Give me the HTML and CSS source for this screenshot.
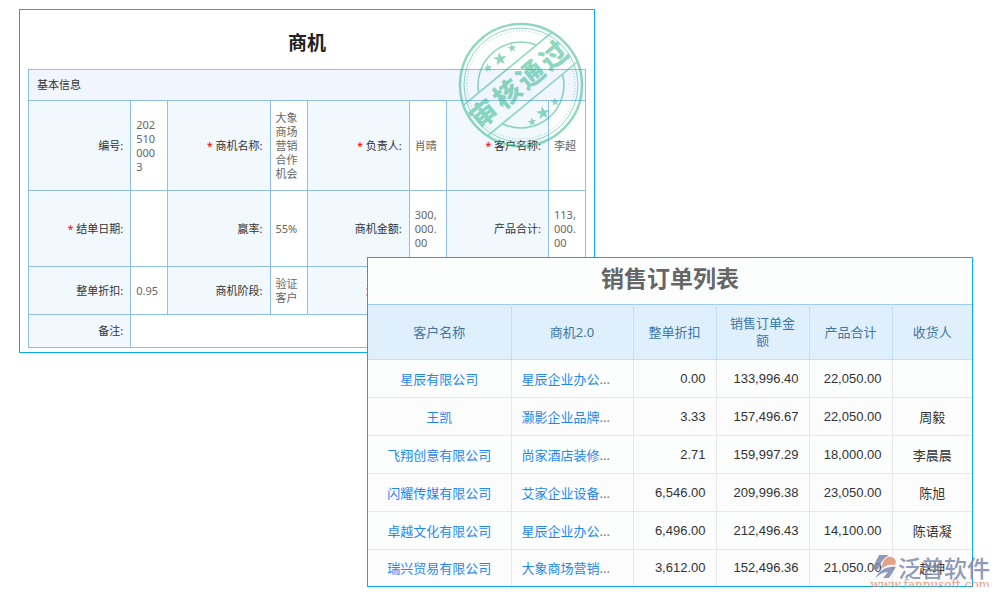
FILE: index.html
```html
<!DOCTYPE html>
<html lang="zh-CN">
<head>
    <meta charset="UTF-8">
    <title>商机</title>
    <link rel="stylesheet" href="styles.css">
</head>
<body>
    <main class="stage">
        <section class="form-panel">
            <h1 class="form-title">商机</h1>
            <table class="form-table">
                <colgroup>
                    <col><col class="col-value">
                    <col><col class="col-value">
                    <col><col class="col-value">
                    <col><col class="col-value">
                </colgroup>
                <tr class="row-section">
                    <th colspan="8" class="section-name">基本信息</th>
                </tr>
                <tr class="row-large">
                    <th>编号:</th>
                    <td>2025100003</td>
                    <th><span class="required">*</span> 商机名称:</th>
                    <td>大象商场营销合作机会</td>
                    <th><span class="required">*</span> 负责人:</th>
                    <td>肖晴</td>
                    <th><span class="required">*</span> 客户名称:</th>
                    <td>李超</td>
                </tr>
                <tr class="row-medium">
                    <th><span class="required">*</span> 结单日期:</th>
                    <td></td>
                    <th>赢率:</th>
                    <td>55%</td>
                    <th>商机金额:</th>
                    <td>300,000.00</td>
                    <th>产品合计:</th>
                    <td>113,000.00</td>
                </tr>
                <tr class="row-small">
                    <th>整单折扣:</th>
                    <td>0.95</td>
                    <th>商机阶段:</th>
                    <td>验证客户</td>
                    <th>源线索:</th>
                    <td></td>
                    <th></th>
                    <td></td>
                </tr>
                <tr class="row-note">
                    <th>备注:</th>
                    <td colspan="7"></td>
                </tr>
            </table>

            <svg class="stamp" viewBox="-63 -64 126 128" role="img" aria-label="审核通过">
                <defs>
                    <path id="star" d="M0 -7 L1.7 -2.3 L6.7 -2.2 L2.7 0.9 L4.1 5.7 L0 2.9 L-4.1 5.7 L-2.7 0.9 L-6.7 -2.2 L-1.7 -2.3 Z"/>
                </defs>
                <g class="stamp-rings">
                    <circle r="61" stroke-width="2.4"/>
                    <circle r="57" stroke-width="1"/>
                    <circle r="54" stroke-width="1" stroke-dasharray="1 2"/>
                </g>
                <g transform="rotate(-39.5)">
                    <g class="stamp-rings">
                        <path d="M-37.5 -21 A43 43 0 0 1 37.5 -21" stroke-width="1.6"/>
                        <path d="M-39 18 A43 43 0 0 0 39 18" stroke-width="1.6"/>
                        <path d="M-57 -21 H57 M-58 18 H58" stroke-width="1.6"/>
                    </g>
                    <g class="stamp-text">
                        <text x="-47" y="8">审</text>
                        <text x="-16" y="8">核</text>
                        <text x="14" y="8">通</text>
                        <text x="44" y="8">过</text>
                    </g>
                </g>
                <g class="stamp-stars">
                    <use href="#star" transform="translate(-21 -26) rotate(-8)"/>
                    <use href="#star" transform="translate(-33 -17) rotate(-8) scale(.65)"/>
                    <use href="#star" transform="translate(-9 -37) rotate(-8) scale(.65)"/>
                    <use href="#star" transform="translate(22 28) rotate(-8)"/>
                    <use href="#star" transform="translate(11 37) rotate(-8) scale(.65)"/>
                    <use href="#star" transform="translate(34 17) rotate(-8) scale(.65)"/>
                </g>
            </svg>
        </section>

        <section class="list-panel">
            <h2 class="list-title">销售订单列表</h2>
            <table class="list-table">
                <colgroup>
                    <col>
                    <col class="col-chance">
                    <col class="col-discount">
                    <col class="col-amount">
                    <col class="col-total">
                    <col class="col-receiver">
                </colgroup>
                <thead>
                    <tr>
                        <th>客户名称</th>
                        <th>商机2.0</th>
                        <th>整单折扣</th>
                        <th>销售订单金额</th>
                        <th>产品合计</th>
                        <th>收货人</th>
                    </tr>
                </thead>
                <tbody>
                    <tr>
                        <td><a href="#">星辰有限公司</a></td>
                        <td class="chance"><a href="#">星辰企业办公</a>...</td>
                        <td class="num">0.00</td>
                        <td class="num">133,996.40</td>
                        <td class="num">22,050.00</td>
                        <td></td>
                    </tr>
                    <tr>
                        <td><a href="#">王凯</a></td>
                        <td class="chance"><a href="#">灏影企业品牌</a>...</td>
                        <td class="num">3.33</td>
                        <td class="num">157,496.67</td>
                        <td class="num">22,050.00</td>
                        <td>周毅</td>
                    </tr>
                    <tr>
                        <td><a href="#">飞翔创意有限公司</a></td>
                        <td class="chance"><a href="#">尚家酒店装修</a>...</td>
                        <td class="num">2.71</td>
                        <td class="num">159,997.29</td>
                        <td class="num">18,000.00</td>
                        <td>李晨晨</td>
                    </tr>
                    <tr>
                        <td><a href="#">闪耀传媒有限公司</a></td>
                        <td class="chance"><a href="#">艾家企业设备</a>...</td>
                        <td class="num">6,546.00</td>
                        <td class="num">209,996.38</td>
                        <td class="num">23,050.00</td>
                        <td>陈旭</td>
                    </tr>
                    <tr>
                        <td><a href="#">卓越文化有限公司</a></td>
                        <td class="chance"><a href="#">星辰企业办公</a>...</td>
                        <td class="num">6,496.00</td>
                        <td class="num">212,496.43</td>
                        <td class="num">14,100.00</td>
                        <td>陈语凝</td>
                    </tr>
                    <tr>
                        <td><a href="#">瑞兴贸易有限公司</a></td>
                        <td class="chance"><a href="#">大象商场营销</a>...</td>
                        <td class="num">3,612.00</td>
                        <td class="num">152,496.36</td>
                        <td class="num">21,050.00</td>
                        <td>赵坤</td>
                    </tr>
                </tbody>
            </table>
        </section>

        <div class="watermark">
            <div class="watermark-brand">
                <svg class="watermark-logo" viewBox="0 0 24 24" aria-hidden="true">
                    <path class="logo-blue" d="M6 0 H16 C11 3 8 7 6 13 L3 16 L0 12 Z"/>
                    <path class="logo-orange" d="M9 11 C10 5 14 1 18 2 C22 3 24 6 22 10 C17 9 12 10 7 15 Z"/>
                    <path class="logo-blue" d="M2 23 C8 14 14 11 23 12 L16 23 H10 L15 17 C10 17 7 19 2 23 Z"/>
                </svg>
                <span>泛普软件</span>
            </div>
            <div class="watermark-url">www.fanpusoft.com</div>
        </div>
    </main>
</body>
</html>
```
FILE: styles.css
```css
* {
    box-sizing: border-box;
}

body {
    margin: 0;
    background: #fff;
    color: #333;
    font-family: "Noto Sans", "Noto Sans CJK SC", sans-serif;
    font-size: 13px;
}

table {
    width: 100%;
    border-collapse: collapse;
    table-layout: fixed;
}

th {
    font-weight: normal;
}

a {
    color: #1e88f0;
    text-decoration: none;
}

/* the list panel shares the middle column with the form panel */
.stage {
    position: relative;
    display: grid;
    grid-template-columns: 348fr 228fr 378fr;
    align-items: start;
    padding: 9px 27px 0 19px;
}

.form-panel {
    position: relative;
    grid-column: 1 / 3;
    grid-row: 1;
    padding: 0 8px 4px;
    border: 1px solid #0aabea;
}

.form-title {
    margin: 0;
    padding: 18px 0 13px;
    color: #222;
    font-family: "Noto Sans CJK SC", sans-serif;
    font-size: 19px;
    line-height: 28px;
    text-align: center;
}

.form-table {
    font-size: 11px;
    line-height: 14px;
}

.form-table th,
.form-table td {
    border: 1px solid #8fbfe4;
}

.form-table th {
    padding: 0 7px 0 0;
    background: #f1f8fe;
    text-align: right;
    white-space: nowrap;
}

.form-table td {
    padding: 0 7px 0 5px;
    color: #666;
    word-break: break-all;
}

.form-table .section-name {
    padding: 0 8px;
    background: #f0f5fe;
    text-align: left;
}

.col-value {
    width: 37px;
}

.row-section {
    height: 31px;
}

.row-large {
    height: 90px;
}

.row-medium {
    height: 76px;
}

.row-small {
    height: 48px;
}

.row-note {
    height: 33px;
}

.required {
    color: #f00;
}

.stamp {
    position: absolute;
    top: 11px;
    right: 10px;
    width: 126px;
    height: 128px;
    opacity: 0.5;
}

.stamp-rings {
    fill: none;
    stroke: #20b184;
}

.stamp-stars,
.stamp-text {
    fill: #20b184;
}

.stamp-text {
    font-family: "Noto Sans CJK SC", sans-serif;
    font-size: 27px;
    font-weight: 900;
    text-anchor: middle;
}

.list-panel {
    grid-column: 2 / 4;
    grid-row: 1;
    margin-top: 248px;
    border: 1px solid #0aabea;
    background: #fcfefe;
    z-index: 1;
}

.list-title {
    margin: 0;
    padding: 3px 0 10px;
    color: #666;
    font-family: "Noto Sans CJK SC", sans-serif;
    font-size: 23px;
    line-height: 33px;
    text-align: center;
}

.list-table th {
    height: 55px;
    padding: 0 10px;
    border: 1px solid #c5def0;
    border-top-color: #9bcbf0;
    background: #dfeffc;
    color: #4178a8;
    line-height: 17px;
}

.list-table td {
    height: 38px;
    padding: 0 10px;
    border: 1px solid #e8e8e8;
    text-align: center;
    white-space: nowrap;
}

.list-table th:first-child,
.list-table td:first-child {
    border-left: 0;
}

.list-table th:last-child,
.list-table td:last-child {
    border-right: 0;
}

.list-table tbody tr:nth-child(even) {
    background: #fcfcfd;
}

.list-table tbody tr:last-child td {
    height: 36px;
    border-bottom: 0;
}

.list-table .chance {
    color: #777;
    text-align: left;
}

.list-table .num {
    font-family: "Liberation Sans", Arial, sans-serif;
    text-align: right;
}

.col-chance {
    width: 122px;
}

.col-discount,
.col-total {
    width: 83px;
}

.col-amount {
    width: 93px;
}

.col-receiver {
    width: 80px;
}

.watermark {
    position: absolute;
    right: 10px;
    bottom: -4px;
    z-index: 2;
    opacity: 0.85;
}

.watermark-brand {
    display: flex;
    align-items: center;
    justify-content: flex-end;
    gap: 1px;
    color: #7d89ad;
    font-family: "Noto Sans CJK SC", sans-serif;
    font-size: 23px;
    font-weight: 500;
    line-height: 24px;
}

.watermark-logo {
    width: 24px;
    height: 24px;
}

.logo-blue {
    fill: #7d89ad;
}

.logo-orange {
    fill: #e3906f;
}

.watermark-url {
    color: #e3906f;
    font-family: "DejaVu Serif", serif;
    font-size: 12px;
    line-height: 12px;
}
```
